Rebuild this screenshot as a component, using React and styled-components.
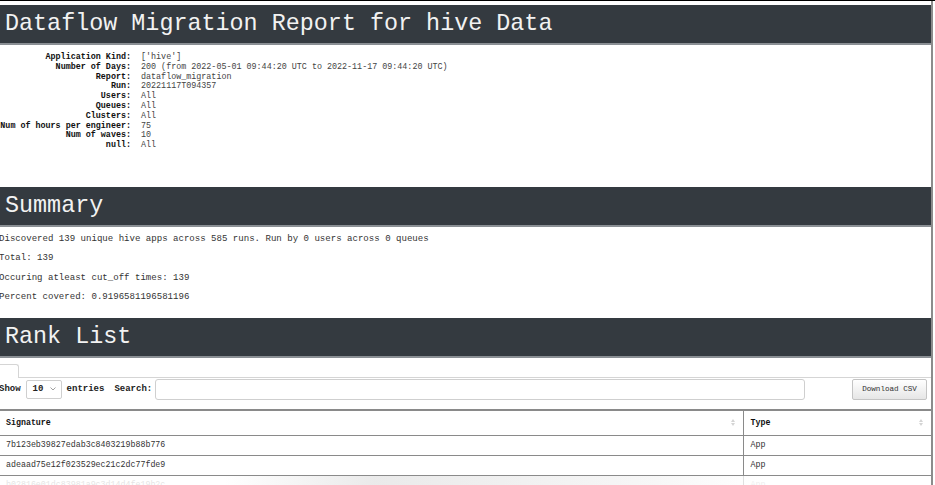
import React from "react";
import styled, { createGlobalStyle } from "styled-components";

const Global = createGlobalStyle`
  html, body { margin: 0; padding: 0; background: #fff; overflow: hidden; }
  body { font-family: "Liberation Mono", "Courier New", monospace; color: #333; }
  * { box-sizing: border-box; }
`;

const Frame = styled.div`
  width: 935px;
  height: 485px;
  border-top: 1px solid #000;
  position: relative;
  overflow: hidden;
`;

const Page = styled.div`
  width: 934px;
  height: 100%;
  border-right: 2px solid #8c8c8c;
  margin-left: -1px;
  padding-top: 4px;
`;

const SectionHeader = styled.h2`
  margin: 0;
  height: 40px;
  background: #343a40;
  border-bottom: 2px solid #8a8f94;
  color: #f2f2f2;
  font-family: "Liberation Mono", "Courier New", monospace;
  font-weight: normal;
  font-size: 23.4px;
  line-height: 38px;
  padding-left: 6px;
  white-space: nowrap;
`;

const Meta = styled.div`
  display: grid;
  grid-template-columns: 132px auto;
  align-content: start;
  column-gap: 10px;
  font-size: 8.4px;
  line-height: 9.8px;
  padding-top: 8px;
  height: 142px;
`;

const MetaLabel = styled.div`
  font-weight: bold;
  text-align: right;
  color: #111;
  white-space: nowrap;
`;

const MetaValue = styled.div`
  color: #444;
  white-space: nowrap;
`;

const Summary = styled.div`
  display: flex;
  flex-direction: column;
  gap: 9.3px;
  padding-top: 7px;
  height: 91px;
`;

const Para = styled.p`
  margin: 0;
  font-size: 9.07px;
  line-height: 10px;
  color: #333;
  white-space: nowrap;
`;

const TabStrip = styled.div`
  margin-top: 6px;
  height: 14px;
  border-bottom: 1px solid #d5d5d5;
  display: flex;
`;

const Tab = styled.div`
  width: 20px;
  height: 14px;
  border: 1px solid #d5d5d5;
  border-left: none;
  border-bottom: none;
  border-top-right-radius: 3px;
  background: #fff;
  margin-bottom: -1px;
`;

const Controls = styled.div`
  display: flex;
  align-items: center;
  height: 22px;
  font-size: 9px;
  padding-right: 4px;
`;

const Bold = styled.span`
  font-weight: bold;
  color: #222;
  margin-right: ${(p) => p.$mr || 0}px;
  white-space: nowrap;
`;

const Select = styled.div`
  width: 36px;
  height: 19px;
  border: 1px solid #cfcfcf;
  border-radius: 2px;
  display: flex;
  align-items: center;
  justify-content: space-between;
  padding: 0 5px 0 6px;
  margin: 0 5px 0 5px;
  font-size: 9px;
  font-weight: bold;
  color: #222;
`;

const Search = styled.div`
  width: 650px;
  height: 21px;
  border: 1px solid #cfcfcf;
  border-radius: 3px;
  margin-left: 3px;
`;

const Button = styled.div`
  margin-left: auto;
  width: 75px;
  height: 21px;
  border: 1px solid #c4c4c4;
  border-radius: 2px;
  background: linear-gradient(#ffffff, #e6e6e6);
  display: flex;
  align-items: center;
  justify-content: center;
  font-size: 7.6px;
  color: #333;
`;

const Table = styled.table`
  margin-top: 9px;
  width: 932px;
  border-collapse: collapse;
  font-size: 8.3px;
  line-height: 10px;
  position: relative;
`;

const Th = styled.th`
  text-align: left;
  font-weight: bold;
  color: #111;
  height: 25px;
  padding: 0 7px;
  border-top: 2px solid #8a8a8a;
  border-bottom: 1px solid #8a8a8a;
  border-right: ${(p) => (p.$last ? "none" : "1px solid #8a8a8a")};
  width: ${(p) => p.$w || "auto"};
  position: relative;
`;

const Td = styled.td`
  height: 20px;
  padding: 0 7px;
  color: ${(p) => (p.$faint ? "#c4c4c4" : "#333")};
  border-bottom: 1px solid #8a8a8a;
  border-right: ${(p) => (p.$last ? "none" : "1px solid #8a8a8a")};
  white-space: nowrap;
`;

const SortArrows = styled.span`
  position: absolute;
  right: 8px;
  top: 8px;
  display: flex;
  flex-direction: column;
  gap: 1px;
`;

const Fade = styled.div`
  position: absolute;
  left: 0;
  right: 0;
  bottom: 0;
  height: 9px;
  background: linear-gradient(
    to right,
    rgba(255, 255, 255, 0.55) 0%,
    rgba(255, 255, 255, 0.55) 24%,
    rgba(232, 232, 232, 0.9) 40%,
    rgba(246, 246, 246, 0.9) 70%,
    rgba(255, 255, 255, 0.7) 82%,
    rgba(255, 255, 255, 0) 84%
  );
  pointer-events: none;
`;

const Arrows = () => (
  <SortArrows>
    <svg width="4" height="3" viewBox="0 0 4 3"><path d="M2 0 L4 3 L0 3 Z" fill="#d4d4d4" /></svg>
    <svg width="4" height="3" viewBox="0 0 4 3"><path d="M0 0 L4 0 L2 3 Z" fill="#d4d4d4" /></svg>
  </SortArrows>
);

const meta = [
  ["Application Kind:", "['hive']"],
  ["Number of Days:", "200 (from 2022-05-01 09:44:20 UTC to 2022-11-17 09:44:20 UTC)"],
  ["Report:", "dataflow_migration"],
  ["Run:", "20221117T094357"],
  ["Users:", "All"],
  ["Queues:", "All"],
  ["Clusters:", "All"],
  ["Num of hours per engineer:", "75"],
  ["Num of waves:", "10"],
  ["null:", "All"],
];

const rows = [
  ["7b123eb39827edab3c8403219b88b776", "App"],
  ["adeaad75e12f023529ec21c2dc77fde9", "App"],
  ["b02816e01dc83981a9c3d14d4fe19b2c", "App"],
];

export default function App() {
  return (
    <Frame>
      <Global />
      <Page>
        <SectionHeader>Dataflow Migration Report for hive Data</SectionHeader>
        <Meta>
          {meta.map(([k, v]) => (
            <React.Fragment key={k}>
              <MetaLabel>{k}</MetaLabel>
              <MetaValue>{v}</MetaValue>
            </React.Fragment>
          ))}
        </Meta>
        <SectionHeader>Summary</SectionHeader>
        <Summary>
          <Para>Discovered 139 unique hive apps across 585 runs. Run by 0 users across 0 queues</Para>
          <Para>Total: 139</Para>
          <Para>Occuring atleast cut_off times: 139</Para>
          <Para>Percent covered: 0.9196581196581196</Para>
        </Summary>
        <SectionHeader>Rank List</SectionHeader>
        <TabStrip>
          <Tab />
        </TabStrip>
        <Controls>
          <Bold>Show</Bold>
          <Select>
            <span>10</span>
            <svg width="6" height="4" viewBox="0 0 6 4"><path d="M0.5 0.5 L3 3 L5.5 0.5" stroke="#888" strokeWidth="0.8" fill="none" /></svg>
          </Select>
          <Bold $mr={10}>entries</Bold>
          <Bold>Search:</Bold>
          <Search />
          <Button>Download CSV</Button>
        </Controls>
        <Table>
          <thead>
            <tr>
              <Th $w="744px">Signature<Arrows /></Th>
              <Th $last>Type<Arrows /></Th>
            </tr>
          </thead>
          <tbody>
            {rows.map(([s, t], i) => (
              <tr key={s}>
                <Td $faint={i === 2}>{s}</Td>
                <Td $last $faint={i === 2}>{t}</Td>
              </tr>
            ))}
          </tbody>
        </Table>
        <Fade />
      </Page>
    </Frame>
  );
}
